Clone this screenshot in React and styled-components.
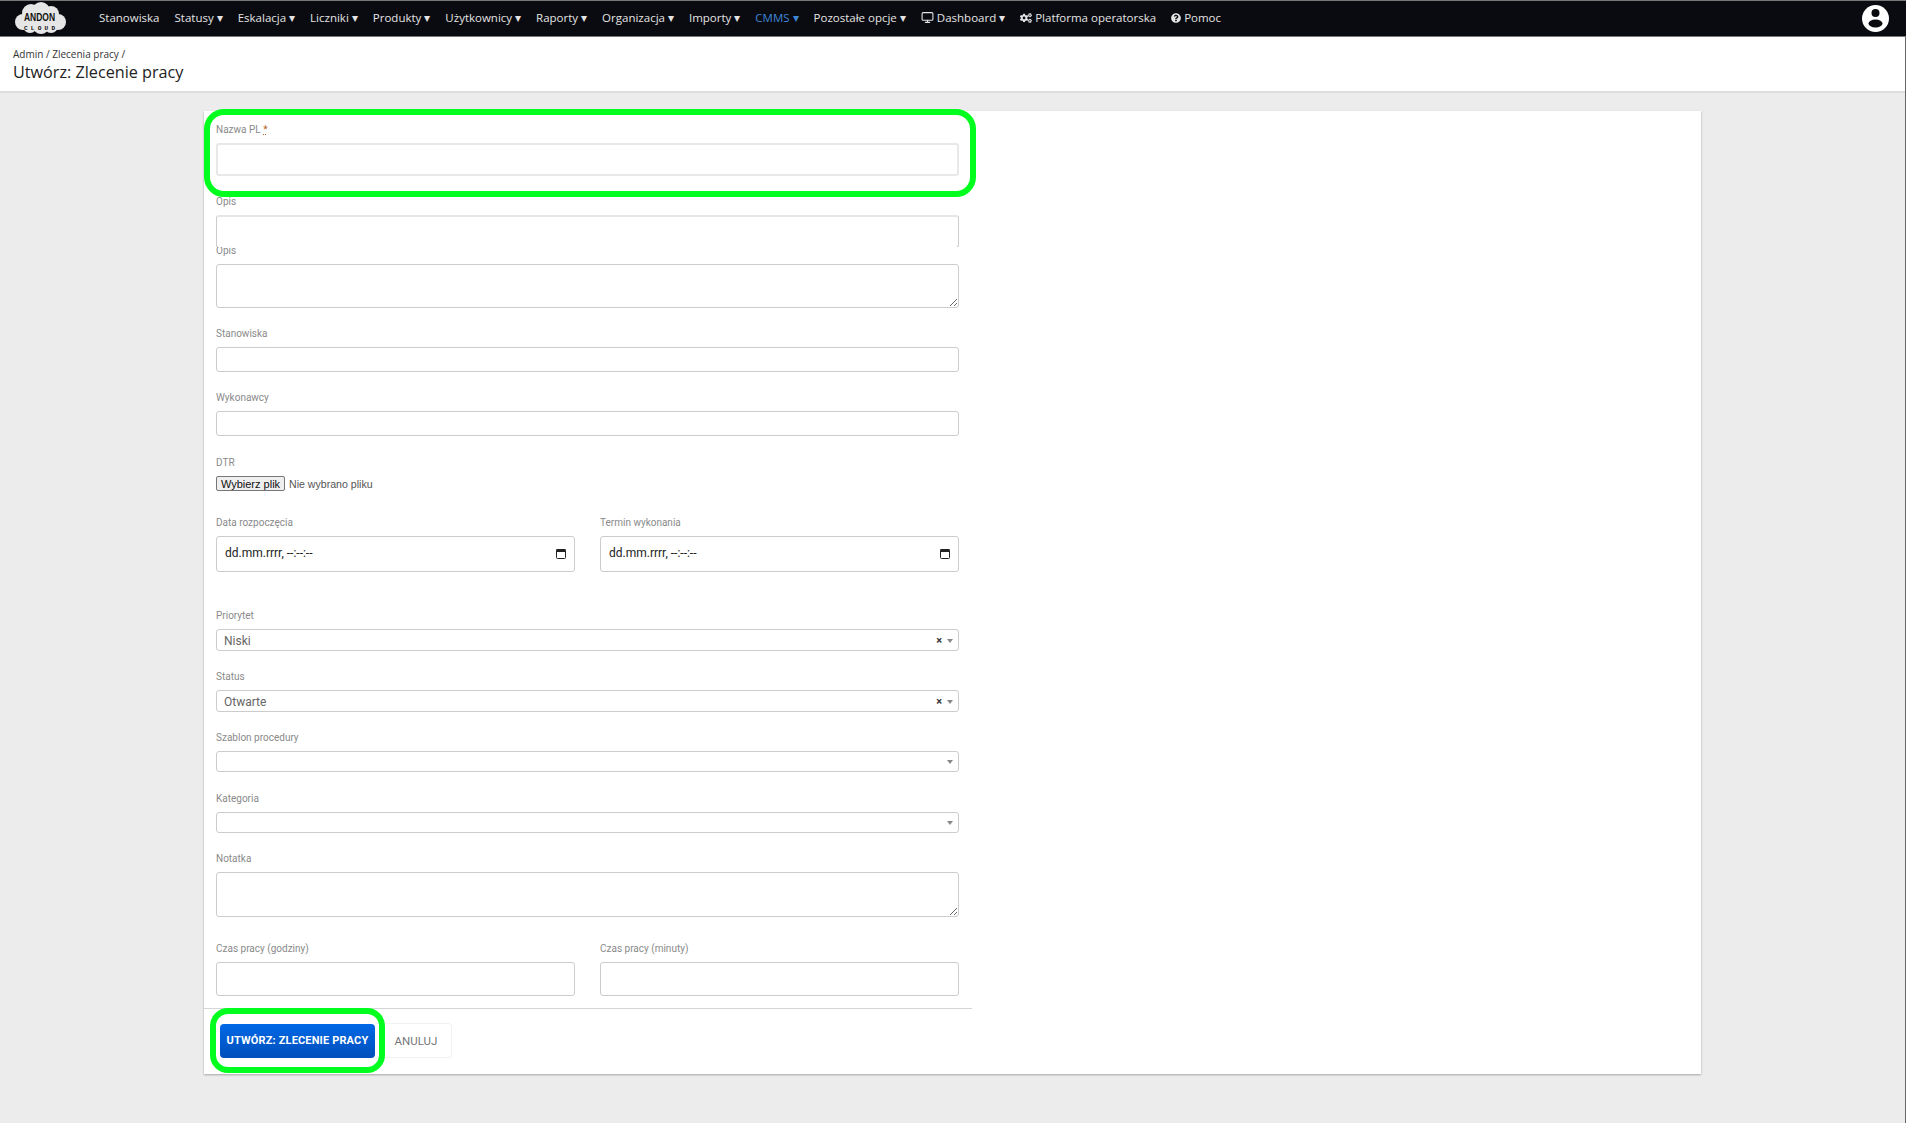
import React from 'react';
import styled, { createGlobalStyle } from 'styled-components';
import { FaCogs, FaQuestionCircle } from 'react-icons/fa';
import { Monitor } from 'lucide-react';

const Global = createGlobalStyle`
  html, body { margin: 0; padding: 0; background: #ececec; }
  * { box-sizing: border-box; }
`;

const Page = styled.div`
  min-height: 1123px;
  background: #ececec;
  border-right: 1px solid #666;
  font-family: Roboto, sans-serif;
`;

const Nav = styled.nav`
  height: 37px;
  display: flex;
  align-items: center;
  background: #0a0b10;
  border-top: 1px solid #777;
  border-bottom: 1px solid #777;
  margin-right: -1px;
  padding: 0 17px 0 14px;
  font-family: "Open Sans", sans-serif;
  font-size: 11.5px;
  color: #e4e4e4;
`;

const Logo = styled.svg`
  width: 52px;
  height: 33px;
  margin-right: 33px;
  flex: none;
`;

const Menu = styled.div`
  display: flex;
  align-items: center;
  gap: 15px;
  flex: 1;
  padding-bottom: 2px;
`;

const MenuItem = styled.span`
  display: flex;
  align-items: center;
  gap: 3px;
  white-space: nowrap;
  color: ${p => (p.$active ? '#3f86d8' : '#e4e4e4')};
`;

const Avatar = styled.svg`
  width: 27px;
  height: 27px;
  flex: none;
`;

const Head = styled.header`
  height: 56px;
  background: #fff;
  border-bottom: 2px solid #ddd;
  padding: 10px 13px 0;
  font-family: "Open Sans", sans-serif;
`;

const Crumbs = styled.div`
  font-size: 10px;
  line-height: 14px;
  color: #333;
`;

const Title = styled.h1`
  margin: 0;
  font-size: 16.2px;
  font-weight: 400;
  line-height: 22px;
  color: #222;
`;

const Card = styled.main`
  width: 1497px;
  margin: 18px 0 0 204px;
  padding-top: 11px;
  background: #fff;
  box-shadow: 0 1px 2px rgba(0, 0, 0, 0.3);
`;

const Form = styled.div`
  width: 743px;
  margin-left: 12px;
`;

const Field = styled.div`
  position: relative;
  margin-bottom: ${p => p.$after ?? 18}px;
  ${p => p.$marked && 'z-index: 2;'}
  ${p => p.$clip && `height: ${p.$clip}px; overflow: hidden; z-index: 1; background: #fff;`}
`;

const Label = styled.label`
  display: block;
  height: 15px;
  padding-top: 1px;
  margin-bottom: 6px;
  font-size: 10px;
  line-height: 14px;
  color: #8a8a8a;
`;

const Required = styled.span`
  color: #b5651d;
  text-decoration: underline dotted;
`;

const Input = styled.input`
  display: block;
  width: 100%;
  height: ${p => p.$h}px;
  padding: 0 8px;
  border: 1px solid #ccc;
  border-top-color: ${p => (p.$soft ? '#e6e6e6' : '#ccc')};
  border-top-width: ${p => (p.$soft ? 2 : 1)}px;
  border-radius: 3px;
  background: #fff;
  outline: none;
  ${p => p.$softAll && 'border: 2px solid #e8e8e8;'}
`;

const TextArea = styled.textarea`
  display: block;
  width: 100%;
  height: ${p => p.$h}px;
  padding: 4px 8px;
  border: 1px solid #ccc;
  border-radius: 3px;
  outline: none;
  resize: vertical;
`;

const FileRow = styled.div`
  display: flex;
  align-items: center;
  height: 15px;
  font-family: "Liberation Sans", sans-serif;
  font-size: 10.6px;
  color: #555;
`;

const FileButton = styled.button`
  height: 15px;
  width: 69px;
  margin-right: 4px;
  padding: 0;
  border: 1px solid #767676;
  border-radius: 2px;
  background: #efefef;
  font-family: "Liberation Sans", sans-serif;
  font-size: 11px;
  line-height: 12px;
  color: #111;
`;

const Columns = styled.div`
  display: grid;
  grid-template-columns: 359px 359px;
  column-gap: 25px;
`;

const DateBox = styled.div`
  display: flex;
  align-items: center;
  justify-content: space-between;
  height: 36px;
  padding: 0 8px 2px;
  border: 1px solid #ccc;
  border-radius: 3px;
  font-size: 12px;
  color: #222;
`;

const SelectBox = styled.div`
  display: flex;
  align-items: center;
  height: ${p => p.$h ?? 22}px;
  padding: 1px 4px 0 7px;
  border: 1px solid #ccc;
  border-radius: 3px;
  font-size: 12px;
  color: #666;
`;

const SelectValue = styled.span`
  flex: 1;
`;

const Clear = styled.span`
  margin-right: 5px;
  font-size: 11px;
  font-weight: 700;
  line-height: 1;
  color: #333;
`;

const Caret = styled.span`
  width: 0;
  height: 0;
  margin-right: 1px;
  border-left: 3px solid transparent;
  border-right: 3px solid transparent;
  border-top: 4px solid #888;
`;

const Footer = styled.div`
  display: flex;
  align-items: center;
  width: 768px;
  margin-top: 12px;
  padding: 14px 0 16px 16px;
  border-top: 1px solid #d5d5d5;
`;

const Primary = styled.button`
  position: relative;
  width: 155px;
  height: 34px;
  padding: 0;
  border: 0;
  border-radius: 4px;
  background: linear-gradient(#0068e6, #004fbb);
  font-family: Roboto, sans-serif;
  font-size: 11px;
  font-weight: 700;
  letter-spacing: 0.15px;
  color: #fff;
`;

const Ghost = styled.button`
  width: 77px;
  height: 35px;
  padding: 0 0 0 6px;
  border: 1px solid #f2f2f2;
  border-left: 0;
  border-radius: 0 4px 4px 0;
  background: #fff;
  font-family: Roboto, sans-serif;
  font-size: 11.5px;
  color: #777;
`;

const Highlight = styled.div`
  position: absolute;
  top: ${p => p.$t}px;
  right: ${p => p.$r}px;
  bottom: ${p => p.$b}px;
  left: ${p => p.$l}px;
  border: 6px solid #00ff1e;
  border-radius: ${p => p.$radius}px;
  pointer-events: none;
`;

const menu = ['Statusy', 'Eskalacja', 'Liczniki', 'Produkty', 'Użytkownicy', 'Raporty', 'Organizacja', 'Importy'];

export default function App() {
  return (
    <Page>
      <Global />
      <Nav>
        <Logo viewBox="0 0 52 33">
          <g fill="#e6e6e6">
            <circle cx="9" cy="20" r="8"/>
            <circle cx="17" cy="11" r="9"/>
            <circle cx="27" cy="9" r="9"/>
            <circle cx="37" cy="12" r="8"/>
            <circle cx="44" cy="20" r="8"/>
            <circle cx="16" cy="24" r="7"/>
            <circle cx="27" cy="24" r="8"/>
            <circle cx="37" cy="24" r="7"/>
          </g>
          <text x="10" y="19" fontFamily="Liberation Sans" fontSize="11.5" fontWeight="700" fill="#111" textLength="31" lengthAdjust="spacingAndGlyphs">ANDON</text>
          <text x="10" y="28" fontFamily="Liberation Mono" fontSize="6" fontWeight="700" fill="#111" textLength="31">CLOUD</text>
        </Logo>
        <Menu>
          <MenuItem>Stanowiska</MenuItem>
          {menu.map(name => <MenuItem key={name}>{name} ▾</MenuItem>)}
          <MenuItem $active>CMMS ▾</MenuItem>
          <MenuItem>Pozostałe opcje ▾</MenuItem>
          <MenuItem><Monitor size={13}/> Dashboard ▾</MenuItem>
          <MenuItem><FaCogs size={12}/> Platforma operatorska</MenuItem>
          <MenuItem><FaQuestionCircle size={10}/> Pomoc</MenuItem>
        </Menu>
        <Avatar viewBox="0 0 27 27">
          <circle cx="13.5" cy="13.5" r="13.5" fill="#fff"/>
          <circle cx="13.5" cy="8" r="4" fill="#0a0b10"/>
          <ellipse cx="13.5" cy="18.5" rx="7" ry="4" fill="#0a0b10"/>
        </Avatar>
      </Nav>
      <Head>
        <Crumbs>Admin / Zlecenia pracy /</Crumbs>
        <Title>Utwórz: Zlecenie pracy</Title>
      </Head>
      <Card>
        <Form>
          <Field $marked>
            <Label>Nazwa PL <Required>*</Required></Label>
            <Input $h={33} $softAll/>
            <Highlight $t={-13} $r={-17} $b={-21} $l={-12} $radius={20}/>
          </Field>
          <Field $clip={53} $after={-4}>
            <Label>Opis</Label>
            <Input $h={33} $soft/>
          </Field>
          <Field>
            <Label>Opis</Label>
            <TextArea $h={44}/>
          </Field>
          <Field>
            <Label>Stanowiska</Label>
            <Input $h={25}/>
          </Field>
          <Field $after={19}>
            <Label>Wykonawcy</Label>
            <Input $h={25}/>
          </Field>
          <Field $after={24}>
            <Label>DTR</Label>
            <FileRow><FileButton>Wybierz plik</FileButton>Nie wybrano pliku</FileRow>
          </Field>
          <Columns>
            <Field $after={36}>
              <Label>Data rozpoczęcia</Label>
              <DateBox>dd.mm.rrrr, --:--:--<CalendarIcon/></DateBox>
            </Field>
            <Field $after={36}>
              <Label>Termin wykonania</Label>
              <DateBox>dd.mm.rrrr, --:--:--<CalendarIcon/></DateBox>
            </Field>
          </Columns>
          <Field>
            <Label>Priorytet</Label>
            <SelectBox><SelectValue>Niski</SelectValue><Clear>×</Clear><Caret/></SelectBox>
          </Field>
          <Field>
            <Label>Status</Label>
            <SelectBox><SelectValue>Otwarte</SelectValue><Clear>×</Clear><Caret/></SelectBox>
          </Field>
          <Field $after={19}>
            <Label>Szablon procedury</Label>
            <SelectBox $h={21}><SelectValue/><Caret/></SelectBox>
          </Field>
          <Field>
            <Label>Kategoria</Label>
            <SelectBox $h={21}><SelectValue/><Caret/></SelectBox>
          </Field>
          <Field $after={24}>
            <Label>Notatka</Label>
            <TextArea $h={45}/>
          </Field>
          <Columns>
            <Field $after={0}>
              <Label>Czas pracy (godziny)</Label>
              <Input $h={34}/>
            </Field>
            <Field $after={0}>
              <Label>Czas pracy (minuty)</Label>
              <Input $h={34}/>
            </Field>
          </Columns>
        </Form>
        <Footer>
          <Primary>
            UTWÓRZ: ZLECENIE PRACY
            <Highlight $t={-16} $r={-10} $b={-15} $l={-10} $radius={18}/>
          </Primary>
          <Ghost>ANULUJ</Ghost>
        </Footer>
      </Card>
    </Page>
  );
}

function CalendarIcon() {
  return (
    <svg width="10" height="11" viewBox="0 0 10 11">
      <rect x="0.5" y="1.5" width="9" height="9" rx="1" fill="none" stroke="#222"/>
      <rect x="0.5" y="1" width="9" height="3" fill="#222"/>
    </svg>
  );
}
